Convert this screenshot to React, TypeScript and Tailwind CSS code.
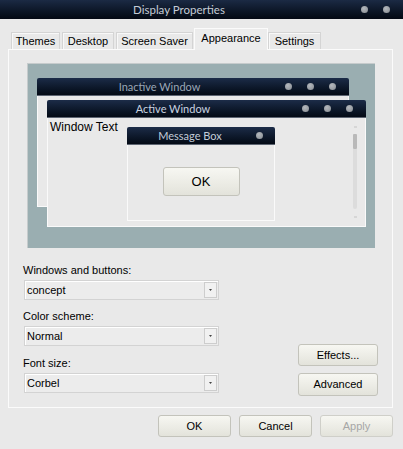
const ui = "font-['Liberation_Sans',Arial,sans-serif]";
const ttl = "font-['Lato','Open_Sans',sans-serif]";

function Dots({ n, className = "" }: { n: number; className?: string }) {
  return (
    <div className={`flex items-center gap-[15px] pl-[3px] ${className}`}>
      {Array.from({ length: n }).map((_, i) => (
        <span key={i} className="block h-[7px] w-[7px] rounded-full bg-[radial-gradient(circle_at_40%_35%,#b4b8bd,#868b91)]" />
      ))}
    </div>
  );
}

function MiniTitle({ title, n, tone }: { title: string; n: number; tone: string }) {
  return (
    <div className="flex h-[18px] items-center rounded-t-[2px] border-b border-[#5d6572] bg-linear-to-b from-[#1c2c48] to-[#040a15]">
      <div className={`flex-1 text-center text-[11px] leading-none ${ttl} ${tone}`}>{title}</div>
      <Dots n={n} className={n === 1 ? "pr-[12px]" : "pr-[13px]"} />
    </div>
  );
}

function Btn({ children, className = "", disabled }: { children: string; className?: string; disabled?: boolean }) {
  return (
    <div
      className={`flex items-center justify-center rounded-[3px] border ${
        disabled ? "border-[#cfcfc9] text-[#a6a6a6]" : "border-[#c3c3bb] text-black"
      } bg-linear-to-b from-[#f7f7f2] to-[#e3e3db] text-[11px] ${className}`}
    >
      {children}
    </div>
  );
}

function Select({ value }: { value: string }) {
  return (
    <div className="ml-px flex h-[20px] w-[195px] items-center border border-[#d3d3d3] bg-[#ececec] shadow-[inset_1px_1px_0_#fff]">
      <span className="flex-1 pl-[2px] text-[11px] text-black">{value}</span>
      <div className="mr-px flex h-[16px] w-[13px] items-center justify-center border border-[#cdcdcd] bg-[#f1f1f1]">
        <svg width="3" height="2" viewBox="0 0 3 2">
          <path d="M0 0h3L1.5 2z" fill="#444" />
        </svg>
      </div>
    </div>
  );
}

function Tab({ label, w, active, className = "" }: { label: string; w: number; active?: boolean; className?: string }) {
  return (
    <div
      style={{ width: w }}
      className={`flex items-center justify-center border border-b-0 text-[11px] text-black ${
        active
          ? "relative z-10 -mb-px h-[22px] border-[#fbfbfb] bg-[#ececec] pb-[3px]"
          : "h-[17px] border-[#d4d4d4] bg-[#e9e9e9] shadow-[inset_1px_1px_0_#f8f8f8]"
      } ${className}`}
    >
      {label}
    </div>
  );
}

export default function App() {
  return (
    <div className={`flex h-[449px] w-[403px] flex-col overflow-hidden bg-[#e9e9e9] ${ui}`}>
      <div className="flex h-[19px] shrink-0 items-center bg-linear-to-b from-[#1b2a44] to-[#040913]">
        <div className={`flex-1 text-center text-[11.5px] leading-none text-[#c5ccd6] ${ttl}`}>Display Properties</div>
        <Dots n={2} className="pr-[13px]" />
      </div>

      <div className="ml-[11px] mt-[9px] flex h-[21px] items-end">
        <Tab label="Themes" w={49} />
        <Tab label="Desktop" w={52} className="ml-[2px]" />
        <Tab label="Screen Saver" w={77} className="ml-[2px]" />
        <Tab label="Appearance" w={74} active className="ml-px" />
        <Tab label="Settings" w={53} />
      </div>

      <div className="ml-[8px] mr-[10px] flex flex-col border border-[#fbfbfb] bg-[#e9e9e9] pb-[11px]">
        <div className="relative ml-[18px] mt-[13px] h-[185px] w-[348px] border-l border-t border-[#c6cbcc] bg-[#9aaeb1]">
          <div className="absolute left-[9px] top-[14px] flex h-[129px] w-[312px] flex-col">
            <MiniTitle title="Inactive Window" n={3} tone="text-[#9aa6b6]" />
            <div className="flex-1 border border-t-0 border-[#fafafa] bg-[#e9e9e9]" />
          </div>

          <div className="absolute left-[19px] top-[36px] flex h-[127px] w-[319px] flex-col">
            <MiniTitle title="Active Window" n={3} tone="text-[#c9d3e0]" />
            <div className="flex flex-1 border border-t-0 border-[#fafafa] bg-[#e9e9e9]">
              <div className="flex-1 pl-[2px] pt-[2px] text-[12px] leading-[14px] text-black">Window Text</div>
              <div className="mr-[8px] flex w-[4px] flex-col items-center pt-[8px]">
                <span className="h-[2px] w-[3px] bg-[#d6d6d6]" />
                <span className="mt-[6px] h-[15px] w-[4px] rounded-[1px] bg-[#b9b9b9]" />
                <span className="h-[60px] w-[4px] rounded-b-[2px] bg-[#dcdcdc]" />
                <span className="mt-[7px] h-[2px] w-[3px] bg-[#d6d6d6]" />
              </div>
            </div>
          </div>

          <div className="absolute left-[99px] top-[63px] flex h-[94px] w-[148px] flex-col">
            <MiniTitle title="Message Box" n={1} tone="text-[#c3ccd9]" />
            <div className="flex flex-1 justify-center border border-t-0 border-[#fafafa] bg-[#e9e9e9]">
              <Btn className="mt-[22px] h-[29px] w-[77px] !text-[13px]">OK</Btn>
            </div>
          </div>
        </div>

        <div className="mt-[16px] flex items-end justify-between pl-[14px] pr-[14px]">
          <div className="mb-[3px] flex flex-col text-[11px] text-black">
            <span className="mb-[3px] h-[13px] leading-[13px]">Windows and buttons:</span>
            <Select value="concept" />
            <span className="mb-[3px] mt-[10px] h-[13px] leading-[13px]">Color scheme:</span>
            <Select value="Normal" />
            <span className="mb-[3px] mt-[11px] h-[13px] leading-[13px]">Font size:</span>
            <Select value="Corbel" />
          </div>
          <div className="flex flex-col gap-[7px]">
            <Btn className="h-[22px] w-[80px]">Effects...</Btn>
            <Btn className="h-[23px] w-[80px]">Advanced</Btn>
          </div>
        </div>
      </div>

      <div className="mr-[10px] mt-[7px] flex justify-end gap-[8px]">
        <Btn className="h-[22px] w-[73px]">OK</Btn>
        <Btn className="h-[22px] w-[73px]">Cancel</Btn>
        <Btn className="h-[22px] w-[73px]" disabled>
          Apply
        </Btn>
      </div>
    </div>
  );
}
